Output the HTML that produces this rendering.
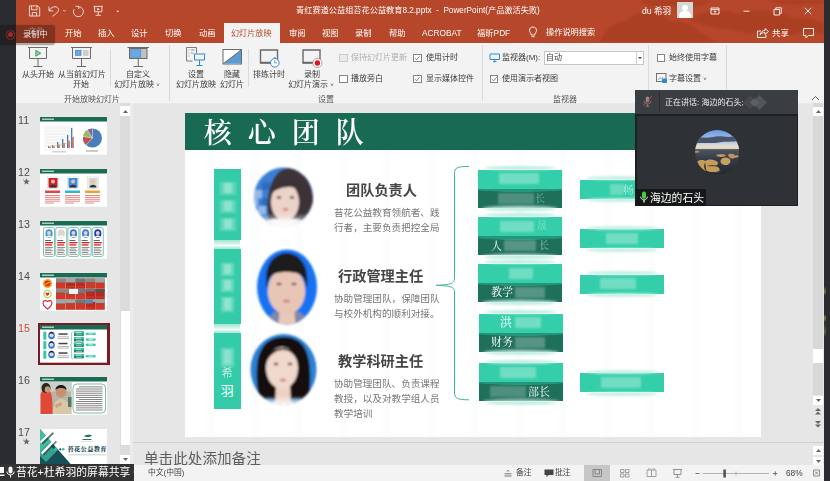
<!DOCTYPE html>
<html lang="zh-CN">
<head>
<meta charset="utf-8">
<title>PowerPoint</title>
<style>
*{box-sizing:border-box;margin:0;padding:0}
html,body{width:830px;height:481px;overflow:hidden;background:#e6e6e6}
body{position:relative;font-family:"Liberation Sans","Noto Sans CJK SC",sans-serif;font-size:8px;color:#333;line-height:1}
.a{position:absolute}
.t{position:absolute;white-space:nowrap;line-height:10px;height:10px}
.t,.num,.h3,.ds,.bt{will-change:transform}
.c{text-align:center}
/* frame */
#ldark{left:0;top:0;width:16px;height:481px;background:#2a2c2f}
#rdark{left:824px;top:0;width:6px;height:481px;background:#2a2c2f}
#title{left:16px;top:0;width:808px;height:42.500px;z-index:1;background:#b7472a;overflow:hidden}
#ribbon{left:16px;top:42px;width:808px;height:62px;background:#f3f3f3;border-bottom:1px solid #e9e9e9}
.w{color:#fff}
.sep{position:absolute;width:1px;background:#dadada}
.cb{position:absolute;width:8.400px;height:8.400px;border:1px solid #868686;background:#fdfdfd}
.cb.dis{border-color:#cbcbcb;background:#ebebeb}
.rl{font-size:8px;color:#3b3b3b}
.gl{font-size:8px;color:#555}
/* panel */
#panel{left:16px;top:103px;width:104px;height:362px;background:#e6e6e6;overflow:hidden}
.num{position:absolute;left:2px;font-size:12px;line-height:12px;color:#555;width:18px;text-align:left}
.th{position:absolute;left:24px;width:67px;height:38px;background:#fff;overflow:hidden}
.th .hd{position:absolute;left:0;top:0;width:67px;height:4px;background:#1a6b54}
#pscroll{left:120px;top:103px;width:10.400px;height:362px;background:#dcdcdc}
#split{left:130.400px;top:103px;width:2.600px;height:362px;background:#ececec}
/* main */
#slide{left:185.200px;top:113px;width:576.200px;height:323.800px;background:#fff;overflow:hidden}
#shead{left:0;top:0;width:577px;height:38px;background:#186a53}
.serif{font-family:"Liberation Serif","Noto Serif CJK SC",serif}
.bar{position:absolute;left:29px;width:26.500px;background:#34cca8}
.h3{position:absolute;font-size:14.200px;line-height:16px;font-weight:bold;color:#454545;white-space:nowrap}
.ds{position:absolute;font-size:9.600px;line-height:15px;color:#767676;white-space:nowrap}
.bx{position:absolute;width:84px;height:38px;background:#1e705b;overflow:hidden;margin-top:.5px}
.bx i{position:absolute;left:0;top:0;width:84px;height:19px;background:#34cfaa;display:block}
.bx b{position:absolute;left:-4px;top:16.500px;width:92px;height:6px;border-radius:50%;background:#23967a;display:block}
.bx u{position:absolute;left:4px;top:35.500px;width:76px;height:6px;border-radius:50%;background:rgba(255,255,255,.38);display:block;filter:blur(.8px)}
.rb{position:absolute;left:395px;width:84px;height:19px;background:#34cfaa;margin-top:.3px}
.bt{position:absolute;color:#fff;font-size:11px;line-height:12px;white-space:nowrap}
.mz{position:absolute;background:rgba(255,255,255,.35);filter:blur(1.2px)}
#notes{left:133px;top:442px;width:691px;height:23px;background:#e6e6e6;border-top:1px solid #cfcfcf}
#status{left:16px;top:465px;width:808px;height:16px;background:#f3f3f3}
#mscroll{left:813px;top:103px;width:10px;height:292px;background:#d8d8d8;overflow:visible}
.sb{position:absolute;width:10.400px;background:#fff}
/* video */
#vid{left:635px;top:90px;width:163px;height:116px;background:#1e1f21}
#vhead{left:0;top:0;width:163px;height:24px;background:#3a3d41}
#vbody{left:1.500px;top:25.500px;width:160px;height:89.500px;background:#2e3135}
#share{left:0;top:464.300px;width:134px;height:16.700px;background:#333334}
</style>
</head>
<body>
<div class="a" id="ldark"></div>
<div class="a" id="rdark"><div class="a" style="left:0;top:286px;width:1.500px;height:70px;background:linear-gradient(#2a2c2f 0,#8a8a30 8%,#2a2c2f 14%,#2a2c2f 40%,#9a9a28 46%,#2a2c2f 52%,#5a7a30 66%,#2a2c2f 72%,#2a2c2f 100%);opacity:.8"></div></div>
<div class="a" id="title">
<svg class="a" style="left:560px;top:0" width="248" height="42" viewBox="576 0 248 42">
<defs><filter id="tb"><feGaussianBlur stdDeviation="1.2"/></filter></defs>
<g fill="#a0381f" opacity=".5" filter="url(#tb)">
<path d="M600 42 C604 30 614 22 628 20 C640 8 662 10 672 22 C682 20 694 24 700 32 C706 36 712 40 716 42 Z"/>
<path d="M690 20 C700 10 724 8 738 14 C752 8 780 10 792 18 C806 16 818 20 824 24 V34 C812 30 800 32 790 36 C776 30 760 30 748 34 C732 28 708 30 690 20 Z"/>
<path d="M640 0 C646 6 660 8 672 5 C684 9 704 8 712 0 Z"/>
<path d="M770 0 C776 5 796 7 806 3 C812 5 820 4 824 2 V0 Z"/>
</g></svg>
<svg class="a" style="left:12px;top:4px" width="100" height="14" viewBox="28 4 100 14" fill="none" stroke="#fff" stroke-width=".85" opacity=".92">
<path d="M29.400 5.900 H37.800 L39.700 7.800 V16 H29.400 Z M31.600 5.900 V9.800 H37 V5.900 M32.300 16 V12.600 H36.600 V16"/>
<path d="M49 6.600 V10.900 H53.300 M49.200 10.700 C51 6.500 56.500 5.400 58.300 8.600 C59.300 11 57.500 12.800 52.500 16.300"/>
<path d="M63.200 10 L64.500 11.400 L65.800 10" stroke-width=".7"/>
<path d="M75.400 6.300 H78.700 V8.900 M78.700 6.700 A5 5 0 1 1 74 9.300"/>
<path d="M93.500 6.400 H103 M94.600 6.600 V11.800 H101.900 V6.600 M98.250 11.800 V15 M95.600 15.300 H100.900"/>
<path d="M97.200 7.800 L99.800 9.200 L97.200 10.600 Z" fill="#fff" stroke="none"/>
<path d="M116.300 10.800 L117.800 12.600 L119.300 10.800 Z" fill="#fff" stroke="none"/>
</svg>
<div class="t w" style="left:280px;top:5.800px;font-size:8.2px">青红赛道公益组苔花公益教育8.2.pptx&nbsp; -&nbsp; PowerPoint(产品激活失败)</div>
<div class="t w" style="left:625.500px;top:5.500px;font-size:8.600px">du 希羽</div>
<div class="a" style="left:661px;top:2px;width:16px;height:16px;background:#d6d6d6;overflow:hidden">
<div class="a" style="left:5px;top:2.500px;width:6px;height:6px;border-radius:50%;background:#fff"></div>
<div class="a" style="left:2px;top:9px;width:12px;height:10px;border-radius:5px 5px 0 0;background:#fff"></div>
</div>
<svg class="a" style="left:690px;top:3.500px" width="112" height="14" viewBox="0 0 112 14" fill="none" stroke="#fff" stroke-width=".9">
<path d="M5 4 H13 V10 H5 Z M5 5.600 H13 M9 9.200 V7 M7.800 8 L9 6.800 L10.200 8"/>
<path d="M37.500 7.200 H43.500"/>
<path d="M68 5.500 H73.500 V11 H68 Z M69.800 5.500 V3.800 H75.300 V9.300 H73.500"/>
<path d="M98.800 3.800 L105.200 10.200 M105.200 3.800 L98.800 10.200"/>
</svg>
<!-- tabs -->
<div class="a" style="left:207.500px;top:22.800px;width:56px;height:20px;background:#f3f3f3"></div>
<div class="t w" style="left:12px;top:26px;font-size:8.3px;opacity:.6">文件</div>
<div class="t w" style="left:49px;top:27.600px;font-size:8.300px">开始</div>
<div class="t w" style="left:81.500px;top:27.600px;font-size:8.300px">插入</div>
<div class="t w" style="left:115px;top:27.600px;font-size:8.300px">设计</div>
<div class="t w" style="left:149px;top:27.600px;font-size:8.300px">切换</div>
<div class="t w" style="left:182.500px;top:27.600px;font-size:8.300px">动画</div>
<div class="t" style="left:215px;top:29px;font-size:8.100px;color:#b7472a">幻灯片放映</div>
<div class="t w" style="left:272.500px;top:27.600px;font-size:8.300px">审阅</div>
<div class="t w" style="left:306px;top:27.600px;font-size:8.300px">视图</div>
<div class="t w" style="left:339px;top:27.600px;font-size:8.300px">录制</div>
<div class="t w" style="left:373px;top:27.600px;font-size:8.300px">帮助</div>
<div class="t w" style="left:406px;top:27.600px;font-size:8.300px">ACROBAT</div>
<div class="t w" style="left:461px;top:27.600px;font-size:8.300px">福昕PDF</div>
<svg class="a" style="left:512px;top:26px" width="10" height="13" viewBox="0 0 10 13" fill="none" stroke="#fff" stroke-width=".9"><path d="M3.200 9 C3.200 7 1.500 6.500 1.500 4.200 C1.500 2.200 3 1 5 1 C7 1 8.500 2.200 8.500 4.200 C8.500 6.500 6.800 7 6.800 9 Z M3.500 10.700 H6.500"/></svg>
<div class="t w" style="left:530px;top:27.600px;font-size:8.200px">操作说明搜索</div>
<svg class="a" style="left:738px;top:26px" width="64" height="13" viewBox="0 0 64 13" fill="none" stroke="#fff" stroke-width=".9">
<path d="M7 5 H3.500 V11.500 H12 V9 M6 9 C6.500 6 8.500 4.500 11 4.500 V2.500 L14.500 5.500 L11 8.500 V6.500 C9 6.500 7.500 7 6 9 Z"/>
<path d="M49.500 2.500 H59.500 V9.500 H54.500 L52 12 V9.500 H49.500 Z"/>
</svg>
<div class="t w" style="left:756px;top:27.600px;font-size:8.500px">共享</div>
</div>
<div class="a" id="ribbon"><div class="t c rl" style="left:-17.8px;width:80px;top:28px;">从头开始</div>
<div class="t c rl" style="left:25.6px;width:80px;top:28px;">从当前幻灯片</div>
<div class="t c rl" style="left:25.3px;width:80px;top:38px;">开始</div>
<div class="t c rl" style="left:82.2px;width:80px;top:28px;">自定义</div>
<div class="t c rl" style="left:81.2px;width:80px;top:38px;">幻灯片放映 <span style="font-size:6px">˅</span></div>
<div class="t c gl" style="left:36.2px;width:80px;top:53px;">开始放映幻灯片</div>
<div class="t c rl" style="left:140px;width:80px;top:28px;">设置</div>
<div class="t c rl" style="left:139.7px;width:80px;top:38px;">幻灯片放映</div>
<div class="t c rl" style="left:176px;width:80px;top:28px;">隐藏</div>
<div class="t c rl" style="left:175.7px;width:80px;top:38px;">幻灯片</div>
<div class="t c rl" style="left:212.9px;width:80px;top:28px;">排练计时</div>
<div class="t c rl" style="left:256px;width:80px;top:28px;">录制</div>
<div class="t c rl" style="left:254.5px;width:80px;top:38px;">幻灯片演示 <span style="font-size:6px">˅</span></div>
<div class="t c gl" style="left:269.5px;width:80px;top:53px;">设置</div>
<div class="t c gl" style="left:509.3px;width:80px;top:53px;">监视器</div>
<div class="sep" style="left:94.3px;top:7px;height:37.5px"></div>
<div class="sep" style="left:232.2px;top:7px;height:37.5px"></div>
<div class="sep" style="left:153.2px;top:3px;height:56px"></div>
<div class="sep" style="left:465.6px;top:3px;height:56px"></div>
<div class="sep" style="left:632.3px;top:3px;height:56px"></div>
<div class="sep" style="left:709.5px;top:3px;height:56px"></div>
<div class="cb dis" style="left:323.3px;top:11.8px"></div>
<div class="t rl" style="left:335.3px;top:11px;color:#b0b0b0">保持幻灯片更新</div>
<div class="cb" style="left:323.3px;top:32.6px"></div>
<div class="t rl" style="left:335.3px;top:32px;">播放旁白</div>
<div class="cb" style="left:397.3px;top:11.8px"><svg width="6" height="6" viewBox="0 0 6 6" style="position:absolute;left:0;top:0" fill="none" stroke="#555" stroke-width=".75"><path d="M1 3.2 L2.6 4.8 L5.5 1.4"/></svg></div>
<div class="t rl" style="left:409.7px;top:11px;">使用计时</div>
<div class="cb" style="left:397.3px;top:32.6px"><svg width="6" height="6" viewBox="0 0 6 6" style="position:absolute;left:0;top:0" fill="none" stroke="#555" stroke-width=".75"><path d="M1 3.2 L2.6 4.8 L5.5 1.4"/></svg></div>
<div class="t rl" style="left:409.7px;top:32px;">显示媒体控件</div>
<div class="cb" style="left:473.7px;top:32.6px"><svg width="6" height="6" viewBox="0 0 6 6" style="position:absolute;left:0;top:0" fill="none" stroke="#555" stroke-width=".75"><path d="M1 3.2 L2.6 4.8 L5.5 1.4"/></svg></div>
<div class="t rl" style="left:486px;top:32px;">使用演示者视图</div>
<div class="cb" style="left:640.7px;top:11.8px"></div>
<div class="t rl" style="left:652.9px;top:11px;">始终使用字幕</div>
<div class="t rl" style="left:652.9px;top:32px;">字幕设置 <span style="font-size:6px">˅</span></div>
<svg class="a" style="left:473px;top:11px" width="12" height="10" viewBox="0 0 12 10" fill="none" stroke="#2b88d8" stroke-width="1"><path d="M1 1 H10.5 V6.5 H1 Z M4 8.7 H7.5 M5.75 6.5 V8.5"/></svg>
<div class="t rl" style="left:486px;top:11px;">监视器(M):</div>
<div class="a" style="left:528px;top:8.5px;width:100px;height:14.5px;background:#fff;border:1px solid #c6c6c6"><div class="a" style="left:91px;top:0;width:1px;height:12.5px;background:#d0d0d0"></div><div class="a" style="left:93.2px;top:5.5px;width:0;height:0;border:2px solid transparent;border-top:2.5px solid #444"></div></div>
<div class="t rl" style="left:530.3px;top:11px;">自动</div>
<svg class="a" style="left:640px;top:31px" width="12" height="11" viewBox="0 0 12 11" fill="none"><rect x=".5" y=".5" width="9.5" height="8" fill="#f3f3f3" stroke="#666" stroke-width=".9"/><path d="M2 7 L4 4.5 L5.5 6 L7 4 " stroke="#888" stroke-width=".7"/><rect x="6" y="5.5" width="5" height="4.5" rx="1" fill="#2b88d8"/></svg>
<svg class="a" style="left:795px;top:53px" width="9" height="6" viewBox="0 0 9 6" fill="none" stroke="#555" stroke-width=".9"><path d="M1 5 L4.5 1.5 L8 5"/></svg>
<svg class="a" style="left:0;top:0" width="340" height="30" viewBox="16 42 340 30" fill="none" stroke="#6a6a6a" stroke-width="1">
<!-- from beginning -->
<path d="M28 47.5 H48 M29.5 48 V58.5 H46.500 V48 M38 58.500 V66 M33.500 66.500 H42.500" />
<path d="M35.800 50.300 L40.800 53.200 L35.800 56.200 Z" fill="#8fd0a0" stroke="#3c9a58" stroke-width=".9"/>
<!-- from current -->
<path d="M71 47.500 H92 M72.500 48 V58.500 H90.500 V48 M81.500 58.500 V66 M77 66.500 H86"/>
<rect x="75.500" y="50.300" width="5.500" height="5" fill="#66abe8" stroke="#3a82c8" stroke-width=".7"/>
<path d="M83 51 H88.500 M83 53 H88.500 M83 55 H88.500" stroke="#8a8a8a" stroke-width=".7"/>
<!-- custom -->
<path d="M127.500 47.500 H149 M138.300 59 V66 M133.500 66.500 H143"/>
<rect x="129.500" y="48.500" width="17.500" height="10" fill="#c2c2c2" stroke="#6a6a6a"/>
<rect x="130.800" y="49.800" width="10" height="7.400" fill="#66abe8" stroke="#3a82c8" stroke-width=".6"/>
<!-- setup -->
<path d="M186.500 47.500 H196.500 V53 M186.500 47.500 V61 H192.500" stroke="#7a7a7a"/>
<path d="M188.500 50 H189.500 M188.500 53 H189.500 M188.500 56 H189.500 M191 50 H194.500 M191 53 H193" stroke="#7a7a7a" stroke-width=".8"/>
<path d="M193.500 54 H205.500 M194.500 54.500 V60 H204.500 V54.500 M199.500 60 V65 M196.500 65.500 H202.500" stroke="#2b88d8"/>
<!-- hide -->
<rect x="223" y="49.500" width="18.500" height="14.500" fill="#fff" stroke="#6a6a6a"/>
<path d="M241 50 V63.500 H223.500 Z" fill="#5b9bd5" stroke="none"/>
<path d="M223.500 63.500 L241 50" stroke="#555" stroke-width=".8"/>
<!-- rehearse -->
<path d="M260.500 50 H277.500 V62.500 H260.500 Z" stroke="#6a6a6a" stroke-width="1.400"/>
<path d="M260 63 H278" stroke="#6a6a6a" stroke-width="1.600"/>
<circle cx="274.800" cy="62.800" r="4.300" fill="#fff" stroke="#2b88d8" stroke-width="1"/>
<path d="M274.800 60.300 V63 H276.800 M273.800 57.700 H275.800" stroke="#2b88d8" stroke-width=".8"/>
<!-- record -->
<path d="M303 50 H320 V62.500 H303 Z" stroke="#6a6a6a" stroke-width="1.400"/>
<path d="M302.500 63 H320.500" stroke="#6a6a6a" stroke-width="1.600"/>
<circle cx="317.400" cy="63" r="4.600" fill="#fff" stroke="#8a8a8a" stroke-width=".7"/>
<circle cx="317.400" cy="63" r="2.700" fill="#e81123" stroke="none"/>
</svg>
</div>
<div class="a" id="panel"><div class="num" style="top:10.5px;font-size:10.700px;color:#4c4c4c">11</div>
<div class="num" style="top:62.5px;font-size:10.700px;color:#4c4c4c">12</div>
<div class="num" style="top:114.5px;font-size:10.700px;color:#4c4c4c">13</div>
<div class="num" style="top:166.5px;font-size:10.700px;color:#4c4c4c">14</div>
<div class="num" style="top:218.5px;font-size:10.700px;color:#c8502f">15</div>
<div class="num" style="top:270.5px;font-size:10.700px;color:#4c4c4c">16</div>
<div class="num" style="top:322.5px;font-size:10.700px;color:#4c4c4c">17</div>
<svg class="a" style="left:7px;top:75px" width="7" height="7" viewBox="0 0 7 7"><path d="M3.500 0.300 L4.400 2.600 L6.800 2.700 L4.900 4.200 L5.600 6.600 L3.500 5.200 L1.400 6.600 L2.100 4.200 L0.200 2.700 L2.600 2.600 Z" fill="#666"/><path d="M0 1 H1.500 M0 2.500 H1" stroke="#888" stroke-width=".5"/></svg>
<svg class="a" style="left:7px;top:335px" width="7" height="7" viewBox="0 0 7 7"><path d="M3.500 0.300 L4.400 2.600 L6.800 2.700 L4.900 4.200 L5.600 6.600 L3.500 5.200 L1.400 6.600 L2.100 4.200 L0.200 2.700 L2.600 2.600 Z" fill="#666"/><path d="M0 1 H1.500 M0 2.500 H1" stroke="#888" stroke-width=".5"/></svg>
<svg class="a" style="left:24.400px;top:14px" width="67" height="37.700" viewBox="0 0 67 37.700"><rect width="67" height="37.700" fill="#fff"/><rect x="0" y="0" width="67" height="4.500" fill="#1a6b54"/><rect x="2" y="1.500" width="12" height="1.500" fill="#cfe6dd" opacity=".8"/><rect x="4" y="8" width="30" height="26" fill="#fafafa"/><path d="M5 11 H33" stroke="#ddd" stroke-width=".4"/><path d="M5 14 H33" stroke="#ddd" stroke-width=".4"/><path d="M5 17 H33" stroke="#ddd" stroke-width=".4"/><path d="M5 20 H33" stroke="#ddd" stroke-width=".4"/><path d="M5 23 H33" stroke="#ddd" stroke-width=".4"/><path d="M5 26 H33" stroke="#ddd" stroke-width=".4"/><path d="M5 29 H33" stroke="#ddd" stroke-width=".4"/><rect x="8" y="29" width="1.300" height="2" fill="#4a7ebb"/><rect x="9.4" y="29.9" width="1.300" height="1.1" fill="#c0504d"/><rect x="12" y="28" width="1.300" height="3" fill="#4a7ebb"/><rect x="13.4" y="29.35" width="1.300" height="1.6500000000000001" fill="#c0504d"/><rect x="17" y="25" width="1.300" height="6" fill="#4a7ebb"/><rect x="18.4" y="27.7" width="1.300" height="3.3000000000000003" fill="#c0504d"/><rect x="22" y="22" width="1.300" height="9" fill="#4a7ebb"/><rect x="23.4" y="26.05" width="1.300" height="4.95" fill="#c0504d"/><rect x="27" y="18" width="1.300" height="13" fill="#4a7ebb"/><rect x="28.4" y="23.85" width="1.300" height="7.15" fill="#c0504d"/><rect x="31" y="11" width="1.300" height="20" fill="#4a7ebb"/><rect x="32.4" y="20.0" width="1.300" height="11.0" fill="#c0504d"/><path d="M8 30 L13 29 L18 28 L23 27 L28 26 L32 25" stroke="#e0c040" stroke-width=".5" fill="none"/><circle cx="52.500" cy="21" r="9.500" fill="#4a7ebb"/><path d="M52.500 21 L46 28 A9.500 9.500 0 0 1 43.200 19.500 Z" fill="#c0504d"/><path d="M52.500 21 L43.200 19.500 A9.500 9.500 0 0 1 47.500 13 Z" fill="#9bbb59"/><path d="M52.500 21 L47.500 13 A9.500 9.500 0 0 1 52.500 11.500 Z" fill="#8064a2"/><path d="M52.500 21 L46 28 M52.500 21 L43.200 19.500 M52.500 21 L47.500 13 M52.500 21 V11.500" stroke="#fff" stroke-width=".5"/><rect x="46" y="33.500" width="12" height="1" fill="#999"/><rect x="12" y="34.500" width="14" height=".8" fill="#aaa"/></svg>
<svg class="a" style="left:24.400px;top:66px" width="67" height="37.700" viewBox="0 0 67 37.700"><rect width="67" height="37.700" fill="#fff"/><rect x="0" y="0" width="67" height="4.500" fill="#1a6b54"/><rect x="2" y="1.500" width="12" height="1.500" fill="#cfe6dd" opacity=".8"/><rect x="7.5" y="8" width="11" height="11.500" fill="#fff" stroke="#ccc" stroke-width=".5"/><rect x="8.5" y="9" width="9" height="9.500" fill="#c8202a"/><circle cx="13.0" cy="12.500" r="2" fill="#e8c0a0"/><path d="M9.5 18.500 C9.5 15 16.5 15 16.5 18.500 Z" fill="#333"/><rect x="5.0" y="21.500" width="15" height="2.500" fill="#e0454a"/><rect x="5.0" y="26.0" width="15" height=".9" fill="#e07a7a"/><rect x="5.0" y="27.9" width="15" height=".9" fill="#e07a7a"/><rect x="5.0" y="29.8" width="15" height=".9" fill="#e07a7a"/><rect x="5.0" y="31.7" width="15" height=".9" fill="#e07a7a"/><rect x="5.0" y="33.6" width="9" height=".9" fill="#e07a7a"/><rect x="27.5" y="8" width="11" height="11.500" fill="#fff" stroke="#ccc" stroke-width=".5"/><rect x="28.5" y="9" width="9" height="9.500" fill="#3a8fdc"/><circle cx="33.0" cy="12.500" r="2" fill="#e8c0a0"/><path d="M29.5 18.500 C29.5 15 36.5 15 36.5 18.500 Z" fill="#333"/><rect x="25.0" y="21.500" width="15" height="2.500" fill="#25bcd0"/><rect x="25.0" y="26.0" width="15" height=".9" fill="#e07a7a"/><rect x="25.0" y="27.9" width="15" height=".9" fill="#e07a7a"/><rect x="25.0" y="29.8" width="15" height=".9" fill="#e07a7a"/><rect x="25.0" y="31.7" width="15" height=".9" fill="#e07a7a"/><rect x="25.0" y="33.6" width="9" height=".9" fill="#e07a7a"/><rect x="47.5" y="8" width="11" height="11.500" fill="#fff" stroke="#ccc" stroke-width=".5"/><rect x="48.5" y="9" width="9" height="9.500" fill="#d8d8d0"/><circle cx="53.0" cy="12.500" r="2" fill="#e8c0a0"/><path d="M49.5 18.500 C49.5 15 56.5 15 56.5 18.500 Z" fill="#333"/><rect x="45.0" y="21.500" width="15" height="2.500" fill="#f0a030"/><rect x="45.0" y="26.0" width="15" height=".9" fill="#e07a7a"/><rect x="45.0" y="27.9" width="15" height=".9" fill="#e07a7a"/><rect x="45.0" y="29.8" width="15" height=".9" fill="#e07a7a"/><rect x="45.0" y="31.7" width="15" height=".9" fill="#e07a7a"/><rect x="45.0" y="33.6" width="9" height=".9" fill="#e07a7a"/></svg>
<svg class="a" style="left:24.400px;top:118px" width="67" height="37.700" viewBox="0 0 67 37.700"><rect width="67" height="37.700" fill="#fff"/><rect x="0" y="0" width="67" height="4.500" fill="#1a6b54"/><rect x="2" y="1.500" width="12" height="1.500" fill="#cfe6dd" opacity=".8"/><rect x="3.5" y="6.500" width="11" height="29" rx="2" fill="#fff" stroke="#2c9a80" stroke-width=".6"/><ellipse cx="9.0" cy="12.500" rx="3.600" ry="4.300" fill="#3a9ad8"/><circle cx="9.0" cy="12" r="2" fill="#f0d0b8"/><path d="M6.3 16 C7.0 14 11.0 14 11.7 16 Z" fill="#fff"/><rect x="5.0" y="19" width="6" height=".9" fill="#555"/><rect x="5.0" y="21" width="8" height="1.300" fill="#e02020"/><rect x="5.0" y="23.300" width="7" height="1.300" fill="#e02020"/><rect x="5.0" y="26.0" width="8" height=".8" fill="#777"/><rect x="5.0" y="27.7" width="6.5" height=".8" fill="#777"/><rect x="5.0" y="29.4" width="8" height=".8" fill="#777"/><rect x="5.0" y="31.1" width="6.5" height=".8" fill="#777"/><rect x="5.0" y="32.8" width="8" height=".8" fill="#777"/><rect x="15.7" y="6.500" width="11" height="29" rx="2" fill="#fff" stroke="#2c9a80" stroke-width=".6"/><ellipse cx="21.2" cy="12.500" rx="3.600" ry="4.300" fill="#d8d8d8"/><circle cx="21.2" cy="12" r="2" fill="#f0d0b8"/><path d="M18.5 16 C19.2 14 23.2 14 23.9 16 Z" fill="#fff"/><rect x="17.2" y="19" width="6" height=".9" fill="#555"/><rect x="17.2" y="21" width="8" height="1.300" fill="#e02020"/><rect x="17.2" y="23.300" width="7" height="1.300" fill="#e02020"/><rect x="17.2" y="26.0" width="8" height=".8" fill="#777"/><rect x="17.2" y="27.7" width="6.5" height=".8" fill="#777"/><rect x="17.2" y="29.4" width="8" height=".8" fill="#777"/><rect x="17.2" y="31.1" width="6.5" height=".8" fill="#777"/><rect x="17.2" y="32.8" width="8" height=".8" fill="#777"/><rect x="27.9" y="6.500" width="11" height="29" rx="2" fill="#fff" stroke="#2c9a80" stroke-width=".6"/><ellipse cx="33.4" cy="12.500" rx="3.600" ry="4.300" fill="#2a7ac8"/><circle cx="33.4" cy="12" r="2" fill="#f0d0b8"/><path d="M30.7 16 C31.4 14 35.4 14 36.099999999999994 16 Z" fill="#fff"/><rect x="29.4" y="19" width="6" height=".9" fill="#555"/><rect x="29.4" y="21" width="8" height="1.300" fill="#e02020"/><rect x="29.4" y="23.300" width="7" height="1.300" fill="#e02020"/><rect x="29.4" y="26.0" width="8" height=".8" fill="#777"/><rect x="29.4" y="27.7" width="6.5" height=".8" fill="#777"/><rect x="29.4" y="29.4" width="8" height=".8" fill="#777"/><rect x="29.4" y="31.1" width="6.5" height=".8" fill="#777"/><rect x="29.4" y="32.8" width="8" height=".8" fill="#777"/><rect x="40.099999999999994" y="6.500" width="11" height="29" rx="2" fill="#fff" stroke="#2c9a80" stroke-width=".6"/><ellipse cx="45.599999999999994" cy="12.500" rx="3.600" ry="4.300" fill="#3a7ad8"/><circle cx="45.599999999999994" cy="12" r="2" fill="#f0d0b8"/><path d="M42.89999999999999 16 C43.599999999999994 14 47.599999999999994 14 48.3 16 Z" fill="#fff"/><rect x="41.599999999999994" y="19" width="6" height=".9" fill="#555"/><rect x="41.599999999999994" y="21" width="8" height="1.300" fill="#e02020"/><rect x="41.599999999999994" y="23.300" width="7" height="1.300" fill="#e02020"/><rect x="41.599999999999994" y="26.0" width="8" height=".8" fill="#777"/><rect x="41.599999999999994" y="27.7" width="6.5" height=".8" fill="#777"/><rect x="41.599999999999994" y="29.4" width="8" height=".8" fill="#777"/><rect x="41.599999999999994" y="31.1" width="6.5" height=".8" fill="#777"/><rect x="41.599999999999994" y="32.8" width="8" height=".8" fill="#777"/><rect x="52.3" y="6.500" width="11" height="29" rx="2" fill="#fff" stroke="#2c9a80" stroke-width=".6"/><ellipse cx="57.8" cy="12.500" rx="3.600" ry="4.300" fill="#1a3ab8"/><circle cx="57.8" cy="12" r="2" fill="#f0d0b8"/><path d="M55.099999999999994 16 C55.8 14 59.8 14 60.5 16 Z" fill="#fff"/><rect x="53.8" y="19" width="6" height=".9" fill="#555"/><rect x="53.8" y="21" width="8" height="1.300" fill="#e02020"/><rect x="53.8" y="23.300" width="7" height="1.300" fill="#e02020"/><rect x="53.8" y="26.0" width="8" height=".8" fill="#777"/><rect x="53.8" y="27.7" width="6.5" height=".8" fill="#777"/><rect x="53.8" y="29.4" width="8" height=".8" fill="#777"/><rect x="53.8" y="31.1" width="6.5" height=".8" fill="#777"/><rect x="53.8" y="32.8" width="8" height=".8" fill="#777"/></svg>
<svg class="a" style="left:24.400px;top:170px" width="67" height="37.700" viewBox="0 0 67 37.700"><rect width="67" height="37.700" fill="#fff"/><rect x="0" y="0" width="67" height="4.500" fill="#1a6b54"/><rect x="2" y="1.500" width="12" height="1.500" fill="#cfe6dd" opacity=".8"/><circle cx="7.500" cy="10.500" r="4.600" fill="#f0b020"/><circle cx="7.500" cy="10.500" r="3" fill="#e03020"/><path d="M5.500 11.500 L9.500 9" stroke="#ffe060" stroke-width="1"/><circle cx="7.500" cy="21" r="4.300" fill="#b8d848"/><circle cx="7.500" cy="21" r="3" fill="#fff"/><path d="M7.500 23 C4 20.500 6 18.500 7.500 20 C9 18.500 11 20.500 7.500 23 Z" fill="#e03030"/><path d="M7.500 36 C0 30.500 3.500 25.500 7.500 28.500 C11.500 25.500 15 30.500 7.500 36 Z" fill="#fff" stroke="#e02040" stroke-width="1.100"/><rect x="16.0" y="5.5" width="9.600" height="10.300" fill="#c83a28"/><rect x="16.0" y="5.5" width="9.600" height="4" fill="#8a8a88"/><rect x="17.0" y="13.0" width="7.600" height="1.300" fill="#e83020"/><rect x="25.8" y="5.5" width="9.600" height="10.300" fill="#a83020"/><rect x="25.8" y="5.5" width="9.600" height="4" fill="#9aa8b0"/><rect x="26.8" y="13.0" width="7.600" height="1.300" fill="#e83020"/><rect x="35.6" y="5.5" width="9.600" height="10.300" fill="#b82a20"/><rect x="35.6" y="5.5" width="9.600" height="4" fill="#6a7a80"/><rect x="36.6" y="13.0" width="7.600" height="1.300" fill="#e83020"/><rect x="45.400000000000006" y="5.5" width="9.600" height="10.300" fill="#c04030"/><rect x="45.400000000000006" y="5.5" width="9.600" height="3.5" fill="#8a8a88"/><rect x="46.400000000000006" y="13.0" width="7.600" height="1.300" fill="#e83020"/><rect x="55.2" y="5.5" width="9.600" height="10.300" fill="#c83a28"/><rect x="55.2" y="5.5" width="9.600" height="4" fill="#9aa8b0"/><rect x="56.2" y="13.0" width="7.600" height="1.300" fill="#e83020"/><rect x="16.0" y="16.0" width="9.600" height="10.300" fill="#c04030"/><rect x="16.0" y="16.0" width="9.600" height="3.5" fill="#8a8a88"/><rect x="17.0" y="23.5" width="7.600" height="1.300" fill="#e83020"/><rect x="25.8" y="16.0" width="9.600" height="10.300" fill="#c83a28"/><rect x="25.8" y="16.0" width="9.600" height="4" fill="#8a8a88"/><rect x="26.8" y="23.5" width="7.600" height="1.300" fill="#e83020"/><rect x="35.6" y="16.0" width="9.600" height="10.300" fill="#c04030"/><rect x="35.6" y="16.0" width="9.600" height="4" fill="#6a7a80"/><rect x="36.6" y="23.5" width="7.600" height="1.300" fill="#e83020"/><rect x="45.400000000000006" y="16.0" width="9.600" height="10.300" fill="#b82a20"/><rect x="45.400000000000006" y="16.0" width="9.600" height="2.5" fill="#6a7a80"/><rect x="46.400000000000006" y="23.5" width="7.600" height="1.300" fill="#e83020"/><rect x="55.2" y="16.0" width="9.600" height="10.300" fill="#a83020"/><rect x="55.2" y="16.0" width="9.600" height="2.5" fill="#4a5a60"/><rect x="56.2" y="23.5" width="7.600" height="1.300" fill="#e83020"/><rect x="16.0" y="26.5" width="9.600" height="10.300" fill="#c04030"/><rect x="16.0" y="26.5" width="9.600" height="4" fill="#9aa8b0"/><rect x="17.0" y="34.0" width="7.600" height="1.300" fill="#e83020"/><rect x="25.8" y="26.5" width="9.600" height="10.300" fill="#c04030"/><rect x="25.8" y="26.5" width="9.600" height="3.5" fill="#9aa8b0"/><rect x="26.8" y="34.0" width="7.600" height="1.300" fill="#e83020"/><rect x="35.6" y="26.5" width="9.600" height="10.300" fill="#c83a28"/><rect x="35.6" y="26.5" width="9.600" height="3.5" fill="#6a7a80"/><rect x="36.6" y="34.0" width="7.600" height="1.300" fill="#e83020"/><rect x="45.400000000000006" y="26.5" width="9.600" height="10.300" fill="#b82a20"/><rect x="45.400000000000006" y="26.5" width="9.600" height="2.5" fill="#9aa8b0"/><rect x="46.400000000000006" y="34.0" width="7.600" height="1.300" fill="#e83020"/><rect x="55.2" y="26.5" width="9.600" height="10.300" fill="#c83a28"/><rect x="55.2" y="26.5" width="9.600" height="3.5" fill="#9aa8b0"/><rect x="56.2" y="34.0" width="7.600" height="1.300" fill="#e83020"/><rect x="29" y="16" width="9" height="5" fill="#f4f4f4"/><rect x="45" y="26.500" width="8" height="4" fill="#5a8ab0"/></svg>
<div class="a" style="left:22.200px;top:219.800px;width:71.600px;height:42.200px;background:#7a1a22"></div><svg class="a" style="left:24.400px;top:222px" width="67" height="37.700" viewBox="0 0 67 37.700"><rect width="67" height="37.700" fill="#fff"/><rect x="0" y="0" width="67" height="4.500" fill="#1a6b54"/><rect x="2" y="1.500" width="12" height="1.500" fill="#cfe6dd" opacity=".8"/><rect x="3.300" y="6.7" width="3" height="8" fill="#35c8a5"/><ellipse cx="11.500" cy="10.5" rx="3.300" ry="3.800" fill="#2a7ae0"/><circle cx="11.500" cy="10.3" r="2" fill="#f0d0c0"/><path d="M9.300 9.5 C9.300 6.0 13.700 6.0 13.700 9.5 C12.500 8.0 10.500 8.0 9.300 9.5 Z" fill="#222"/><rect x="18.500" y="8.3" width="9" height="1.500" fill="#444"/><rect x="17.500" y="11.5" width="11.500" height=".7" fill="#999"/><rect x="17.500" y="13.2" width="11.500" height=".7" fill="#999"/><rect x="3.300" y="16.2" width="3" height="8" fill="#35c8a5"/><ellipse cx="11.500" cy="20.0" rx="3.300" ry="3.800" fill="#2a7ae0"/><circle cx="11.500" cy="19.8" r="2" fill="#f0d0c0"/><path d="M9.300 19.0 C9.300 15.5 13.700 15.5 13.700 19.0 C12.500 17.5 10.500 17.5 9.300 19.0 Z" fill="#222"/><rect x="18.500" y="17.8" width="9" height="1.500" fill="#444"/><rect x="17.500" y="21.0" width="11.500" height=".7" fill="#999"/><rect x="17.500" y="22.7" width="11.500" height=".7" fill="#999"/><rect x="3.300" y="25.7" width="3" height="8" fill="#35c8a5"/><ellipse cx="11.500" cy="29.5" rx="3.300" ry="3.800" fill="#2a7ae0"/><circle cx="11.500" cy="29.3" r="2" fill="#f0d0c0"/><path d="M9.300 28.5 C9.300 25.0 13.700 25.0 13.700 28.5 C12.500 27.0 10.500 27.0 9.300 28.5 Z" fill="#222"/><rect x="18.500" y="27.3" width="9" height="1.500" fill="#444"/><rect x="17.500" y="30.5" width="11.500" height=".7" fill="#999"/><rect x="17.500" y="32.2" width="11.500" height=".7" fill="#999"/><path d="M33 7 C31.800 7 31.500 7.500 31.500 8.500 V19 C31.500 20 31 20.300 30 20.500 C31 20.700 31.500 21 31.500 22 V32.500 C31.500 33.500 31.800 34 33 34" fill="none" stroke="#35b090" stroke-width=".5"/><rect x="34" y="6.5" width="9.800" height="4.400" fill="#1d7a62"/><rect x="34" y="6.5" width="9.800" height="2.200" fill="#36c9a7"/><rect x="36" y="7.2" width="5" height=".8" fill="#d8f4ec"/><rect x="36" y="9.4" width="6" height=".8" fill="#b0d8cc"/><rect x="34" y="12" width="9.800" height="4.400" fill="#1d7a62"/><rect x="34" y="12" width="9.800" height="2.200" fill="#36c9a7"/><rect x="36" y="12.7" width="5" height=".8" fill="#d8f4ec"/><rect x="36" y="14.9" width="6" height=".8" fill="#b0d8cc"/><rect x="34" y="17.5" width="9.800" height="4.400" fill="#1d7a62"/><rect x="34" y="17.5" width="9.800" height="2.200" fill="#36c9a7"/><rect x="36" y="18.2" width="5" height=".8" fill="#d8f4ec"/><rect x="36" y="20.4" width="6" height=".8" fill="#b0d8cc"/><rect x="34" y="23" width="9.800" height="4.400" fill="#1d7a62"/><rect x="34" y="23" width="9.800" height="2.200" fill="#36c9a7"/><rect x="36" y="23.7" width="5" height=".8" fill="#d8f4ec"/><rect x="36" y="25.9" width="6" height=".8" fill="#b0d8cc"/><rect x="34" y="29" width="9.800" height="4.400" fill="#1d7a62"/><rect x="34" y="29" width="9.800" height="2.200" fill="#36c9a7"/><rect x="36" y="29.7" width="5" height=".8" fill="#d8f4ec"/><rect x="36" y="31.9" width="6" height=".8" fill="#b0d8cc"/><rect x="45.800" y="7.7" width="9.800" height="2.200" fill="#36c9a7"/><rect x="48.500" y="8.4" width="4.500" height=".8" fill="#d8f4ec"/><rect x="45.800" y="13.5" width="9.800" height="2.200" fill="#36c9a7"/><rect x="48.500" y="14.2" width="4.500" height=".8" fill="#d8f4ec"/><rect x="45.800" y="18.7" width="9.800" height="2.200" fill="#36c9a7"/><rect x="48.500" y="19.4" width="4.500" height=".8" fill="#d8f4ec"/><rect x="45.800" y="30.2" width="9.800" height="2.200" fill="#36c9a7"/><rect x="48.500" y="30.9" width="4.500" height=".8" fill="#d8f4ec"/></svg>
<svg class="a" style="left:24.400px;top:274px" width="67" height="37.700" viewBox="0 0 67 37.700"><rect width="67" height="37.700" fill="#fff"/><rect x="0" y="0" width="67" height="4.500" fill="#1a6b54"/><rect x="2" y="1.500" width="12" height="1.500" fill="#cfe6dd" opacity=".8"/><rect x="0.500" y="5.500" width="31" height="31.500" fill="#b8b4a8"/><rect x="0.500" y="5.500" width="31" height="9" fill="#c8d0c8"/><path d="M0.500 37 V17 C3 11 10 11 11.500 18 C13 24 12 30 13 37 Z" fill="#e04838"/><ellipse cx="6" cy="11" rx="4.500" ry="5" fill="#2a2420"/><ellipse cx="7.500" cy="12.500" rx="2.800" ry="3.300" fill="#c89878"/><ellipse cx="21" cy="14.500" rx="5.500" ry="6" fill="#c89070"/><path d="M15.500 13 C15.500 6.500 26.500 6.500 26.500 13 C24 10.500 18 10.500 15.500 13 Z" fill="#1e1a18"/><path d="M12.500 37 C13 26 17 22 21 22 C26 22 30 26 31.500 37 Z" fill="#d8c8a8"/><path d="M15 28 L21 25 L22 28 L16 31 Z" fill="#d0a080"/><rect x="28" y="20" width="3.500" height="10" fill="#5a7a60"/><rect x="33" y="7" width="32.500" height="29" rx="4" fill="#fff" stroke="#2c8a70" stroke-width=".6"/><rect x="39" y="9.5" width="23.5" height=".8" fill="#666"/><rect x="36" y="11.6" width="26.5" height=".8" fill="#666"/><rect x="36" y="13.7" width="26.5" height=".8" fill="#666"/><rect x="36" y="15.8" width="26.5" height=".8" fill="#666"/><rect x="36" y="17.9" width="26.5" height=".8" fill="#666"/><rect x="36" y="20.0" width="26.5" height=".8" fill="#666"/><rect x="39" y="22.1" width="23.5" height=".8" fill="#666"/><rect x="36" y="24.200000000000003" width="26.5" height=".8" fill="#666"/><rect x="36" y="26.3" width="26.5" height=".8" fill="#666"/><rect x="36" y="28.400000000000002" width="26.5" height=".8" fill="#666"/><rect x="36" y="30.5" width="26.5" height=".8" fill="#666"/><rect x="36" y="32.6" width="26.5" height=".8" fill="#666"/></svg>
<svg class="a" style="left:24.200px;top:326px" width="67" height="37.700" viewBox="0 0 67 37.700"><defs><filter id="b17"><feGaussianBlur stdDeviation=".5"/></filter></defs><rect width="67" height="37.700" fill="#fff"/>
<path d="M0 0 L33 37.700 H0 Z" fill="#17505a"/>
<path d="M0 0 L12.500 14.300 L0 27 Z" fill="#42b9a2"/>
<path d="M0 22 L8 14 L16 23 L6 33 L0 27 Z" fill="#3aa892" opacity=".9"/>
<g filter="url(#b17)"><path d="M1 13 L12 2.500 L14 4.500 L3 15.500 Z" fill="#2a3a40" opacity=".7"/><path d="M2 24 L15 11 L17 13 L4 26.500 Z" fill="#20303a" opacity=".6"/></g>
<path d="M0 12.500 L11.500 1.500 L12.800 3 L1 14.500 Z M1 23.500 L14.500 10 L16 11.500 L2.500 25.500 Z" fill="#fff"/>
<path d="M15.500 18 L18 20.500 L15.500 23 L13 20.500 Z" fill="#3ab8a0"/><circle cx="20.300" cy="20.300" r="1.100" fill="#17505a"/><circle cx="23.300" cy="20.300" r="1.200" fill="#3ab8a0"/>
<path d="M44 7 C46 5.500 50 5.500 52 6.200 C50.500 8.500 46 8.800 44 7 Z" fill="#1a7a5a"/><rect x="42.500" y="10" width="9" height=".9" fill="#2a5a50"/><rect x="41" y="12.300" width="12" height=".4" fill="#9ab8b0"/>
<text x="27.500" y="21.800" font-family="Liberation Serif,Noto Serif CJK SC,serif" font-weight="900" font-size="6.200" fill="#1c4850" textLength="39" lengthAdjust="spacing">苔花公益教育</text>
<rect x="28.500" y="25.600" width="38" height=".6" fill="#9ab4ac"/></svg>

</div>
<div class="a" id="pscroll"><div class="sb" style="left:0;top:2.800px;height:10.300px"></div>
<svg class="a" style="left:2.500px;top:6.500px" width="5" height="3" viewBox="0 0 5 3"><path d="M0 3 L2.500 0 L5 3 Z" fill="#666"/></svg>
<div class="sb" style="left:0.500px;top:208px;height:134px;width:9px"></div>
<div class="sb" style="left:0;top:351.500px;height:9.500px"></div>
<svg class="a" style="left:2.500px;top:355px" width="5" height="3" viewBox="0 0 5 3"><path d="M0 0 L2.500 3 L5 0 Z" fill="#666"/></svg>
</div>
<div class="a" id="split"></div>
<div class="a" id="mscroll"><div class="sb" style="left:0;top:3.500px;height:9px;width:10px"></div>
<svg class="a" style="left:2.500px;top:6.500px" width="5" height="3" viewBox="0 0 5 3"><path d="M0 3 L2.500 0 L5 3 Z" fill="#666"/></svg>
<div class="sb" style="left:0;top:246px;height:13.500px;width:10px"></div>
<div class="sb" style="left:0;top:292.500px;height:9.500px;width:10px"></div>
<svg class="a" style="left:2.500px;top:296px" width="5" height="3" viewBox="0 0 5 3"><path d="M0 0 L2.500 3 L5 0 Z" fill="#666"/></svg>
<svg class="a" style="left:2px;top:305px" width="6" height="20" viewBox="0 0 6 20" fill="#666"><path d="M0 3 L3 0 L6 3 Z M0 6.500 L3 3.500 L6 6.500 Z M0 13 L3 16 L6 13 Z M0 16.500 L3 19.500 L6 16.500 Z"/></svg>
</div>
<div class="a" id="slide"><div class="a" id="shead"></div>
<div class="a serif w" style="left:18.500px;top:2.400px;font-size:28px;line-height:38px;letter-spacing:16px;font-weight:600;white-space:nowrap">核心团队</div>
<div class="a" style="left:0;top:37px;width:577px;height:287px;background:repeating-linear-gradient(90deg,#fff 0,#fff 20px,#fbfcfc 26px,#fff 32px,#fff 44px)"></div>
<div class="bar" style="top:56px;height:71px"></div>
<div class="a" style="left:29px;width:26px;top:127px;height:5px;background:linear-gradient(#9fe5d3,#e4f8f3)"></div>
<div class="bar" style="top:136px;height:75px"></div>
<div class="a" style="left:29px;width:26px;top:211px;height:5px;background:linear-gradient(#9fe5d3,#e4f8f3)"></div>
<div class="a" style="left:29px;width:26px;top:133px;height:3px;background:linear-gradient(#e4f8f3,#9fe5d3)"></div>
<div class="bar" style="top:220px;height:75.7px"></div>
<div class="a" style="left:29px;width:26px;top:217px;height:3px;background:linear-gradient(#e4f8f3,#9fe5d3)"></div>
<div class="a" style="left:34.5px;top:68.6px;width:16px;height:13.5px;background:rgba(255,255,255,0.22);filter:blur(1.1px)"></div>
<div class="a" style="left:39px;top:69.6px;width:8px;height:10.5px;background:rgba(255,255,255,0.3);filter:blur(0.8px)"></div>
<div class="a" style="left:34.5px;top:87.3px;width:16px;height:13px;background:rgba(255,255,255,0.22);filter:blur(1.1px)"></div>
<div class="a" style="left:39px;top:88.3px;width:8px;height:10px;background:rgba(255,255,255,0.3);filter:blur(0.8px)"></div>
<div class="a" style="left:34.5px;top:104.5px;width:16px;height:13.5px;background:rgba(255,255,255,0.22);filter:blur(1.1px)"></div>
<div class="a" style="left:39px;top:105.5px;width:8px;height:10.5px;background:rgba(255,255,255,0.3);filter:blur(0.8px)"></div>
<div class="a" style="left:35.5px;top:149.7px;width:13px;height:13.5px;background:rgba(255,255,255,0.25);filter:blur(1.1px)"></div>
<div class="a" style="left:39px;top:150.7px;width:7px;height:10.5px;background:rgba(255,255,255,0.28);filter:blur(0.8px)"></div>
<div class="a" style="left:35.5px;top:166px;width:13px;height:13px;background:rgba(255,255,255,0.25);filter:blur(1.1px)"></div>
<div class="a" style="left:39px;top:167px;width:7px;height:10px;background:rgba(255,255,255,0.28);filter:blur(0.8px)"></div>
<div class="a" style="left:35.5px;top:183.5px;width:13px;height:15px;background:rgba(255,255,255,0.25);filter:blur(1.1px)"></div>
<div class="a" style="left:39px;top:184.5px;width:7px;height:12px;background:rgba(255,255,255,0.28);filter:blur(0.8px)"></div>
<div class="a" style="left:35.5px;top:235px;width:13px;height:19px;background:rgba(255,255,255,0.25);filter:blur(1.1px)"></div>
<div class="a" style="left:39px;top:237px;width:7px;height:14px;background:rgba(255,255,255,0.25);filter:blur(0.8px)"></div>
<div class="a w c" style="left:29px;width:26px;top:254px;font-size:11px;line-height:13px;opacity:.7">希</div>
<div class="a w c" style="left:29px;width:26px;top:269.5px;font-size:13px;line-height:15px">羽</div>
<svg class="a" style="left:60px;top:47px" width="80" height="260" viewBox="245 160 80 260">
<defs><filter id="bl" x="-10%" y="-10%" width="120%" height="120%"><feGaussianBlur stdDeviation="1.3"/></filter>
<linearGradient id="fw" x1="0" y1="0" x2="0" y2="1"><stop offset="0" stop-color="#fff" stop-opacity="0"/><stop offset="1" stop-color="#fff"/></linearGradient>
<clipPath id="c1"><ellipse cx="283.500" cy="197" rx="29.500" ry="29.500"/></clipPath>
<clipPath id="c2"><ellipse cx="287" cy="287" rx="30" ry="37.500"/></clipPath>
<clipPath id="c3"><ellipse cx="283.500" cy="369.500" rx="33" ry="35.500"/></clipPath></defs>
<g filter="url(#bl)">
<g clip-path="url(#c1)"><rect x="250" y="160" width="70" height="75" fill="#3a80d6"/>
<path d="M254 190 H262 V198 H254 Z M258 206 H266 V214 H258 Z M254 198 H258 V206 H254 Z" fill="#fff" opacity=".45"/>
<path d="M262 182 H270 V190 H262 Z M262 198 H270 V206 H262 Z" fill="#1a4a90" opacity=".35"/>
<path d="M269 224 C266 210 266 176 284 169 C302 164 314 184 313 202 C313 214 309 221 300 224 Z" fill="#3c3238"/>
<path d="M302 222 C310 216 313 206 312 196 L318 210 L310 224 Z" fill="#54464a"/>
<ellipse cx="285" cy="202" rx="14" ry="19" fill="#ebd3c9"/>
<path d="M269 196 C269 178 300 172 304 194 C297 185 280 184 269 196 Z" fill="#3a3036"/>
<ellipse cx="279" cy="197.500" rx="2.300" ry="1.200" fill="#5a4444"/><ellipse cx="292" cy="197.500" rx="2.300" ry="1.200" fill="#5a4444"/>
<ellipse cx="285.500" cy="209.500" rx="3" ry="1.400" fill="#d88c8c"/>
<path d="M256 236 C258 218 276 217 285 220 C296 217 310 219 312 236 Z" fill="#f4eeee"/>
<rect x="250" y="213" width="70" height="14" fill="url(#fw)"/><rect x="250" y="226" width="70" height="10" fill="#fff"/></g>
<g clip-path="url(#c2)"><rect x="250" y="245" width="75" height="85" fill="#1572f2"/>
<path d="M266 330 C268 312 276 310 287 310 C298 310 306 312 308 330 Z" fill="#8088a8"/>
<path d="M278 330 L280 306 H294 L296 330 Z" fill="#e8c8b8"/>
<ellipse cx="286.500" cy="291" rx="18.700" ry="23.500" fill="#e8c6b6"/>
<path d="M267 289 C258 241 315 241 306.500 289 C305 276 301 272 286.500 272 C272 272 268.500 276 267 289 Z" fill="#1e1a1c"/>
<ellipse cx="279" cy="284" rx="2.600" ry="1.300" fill="#6a4c48"/><ellipse cx="294" cy="284" rx="2.600" ry="1.300" fill="#6a4c48"/>
<ellipse cx="286.500" cy="301" rx="3.600" ry="1.500" fill="#cc8484"/></g>
<g clip-path="url(#c3)"><rect x="248" y="330" width="72" height="80" fill="#2c80d2"/>
<path d="M259 399 C252 358 260 337 284 337 C308 337 313 360 309 399 Z" fill="#15110f"/>
<path d="M268 410 C270 396 296 396 298 410 Z" fill="#f0e0d8"/>
<path d="M275 404 L276 384 H290 L291 404 Z" fill="#ecd2c4"/>
<ellipse cx="282" cy="368" rx="16" ry="21" fill="#efd8cc"/>
<path d="M265 366 C264 342 302 342 300 368 C296 354 290 350 283 350 C275 350 268 356 265 366 Z" fill="#15110f"/>
<ellipse cx="276" cy="364" rx="2.300" ry="1.200" fill="#5a4040"/><ellipse cx="290" cy="364" rx="2.300" ry="1.200" fill="#5a4040"/>
<ellipse cx="283" cy="380" rx="3.200" ry="1.500" fill="#d88888"/>
<rect x="248" y="396" width="72" height="10" fill="url(#fw)"/></g>
</g>
</svg>
<div class="h3" style="left:160.5px;top:69px">团队负责人</div>
<div class="ds" style="left:149px;top:92px">苔花公益教育领航者、践<br>行者，主要负责把控全局</div>
<div class="h3" style="left:153px;top:155px">行政管理主任</div>
<div class="ds" style="left:149px;top:177.5px">协助管理团队，保障团队<br>与校外机构的顺利对接。</div>
<div class="h3" style="left:153px;top:240px">教学科研主任</div>
<div class="ds" style="left:149px;top:263px">协助管理团队、负责课程<br>教授，以及对教学组人员<br>教学培训</div>
<svg class="a" style="left:245px;top:47px" width="45" height="245" viewBox="430 160 45 245" fill="none" stroke="#3fb595" stroke-width="1"><path d="M469 166.500 C457 166.500 454.500 167.500 454.500 174 V278 C454.500 283.500 451 284.800 436 285.300 C451 285.800 454.500 287 454.500 292 V392 C454.500 398.500 457 399.800 469 399.800"/></svg>
<div class="bx" style="left:293px;top:56px"><b></b><i></i><u></u></div>
<div class="a" style="left:299px;top:94px;width:72px;height:4px;border-radius:50%;background:#bfeee2;filter:blur(1.200px)"></div>
<div class="a" style="left:299px;top:52.5px;width:72px;height:4px;border-radius:50%;background:#bfeee2;filter:blur(1.200px)"></div>
<div class="bx" style="left:293px;top:103.7px"><b></b><i></i><u></u></div>
<div class="a" style="left:299px;top:141.7px;width:72px;height:4px;border-radius:50%;background:#bfeee2;filter:blur(1.200px)"></div>
<div class="a" style="left:299px;top:100.2px;width:72px;height:4px;border-radius:50%;background:#bfeee2;filter:blur(1.200px)"></div>
<div class="bx" style="left:293px;top:150.3px"><b></b><i></i><u></u></div>
<div class="a" style="left:299px;top:188.3px;width:72px;height:4px;border-radius:50%;background:#bfeee2;filter:blur(1.200px)"></div>
<div class="a" style="left:299px;top:146.8px;width:72px;height:4px;border-radius:50%;background:#bfeee2;filter:blur(1.200px)"></div>
<div class="bx" style="left:294px;top:200.3px"><b></b><i></i><u></u></div>
<div class="a" style="left:300px;top:238.3px;width:72px;height:4px;border-radius:50%;background:#bfeee2;filter:blur(1.200px)"></div>
<div class="a" style="left:300px;top:196.8px;width:72px;height:4px;border-radius:50%;background:#bfeee2;filter:blur(1.200px)"></div>
<div class="bx" style="left:294px;top:249.300px;height:38.700px"><b></b><i></i><u></u></div>
<div class="a" style="left:300px;top:288px;width:72px;height:4px;border-radius:50%;background:#bfeee2;filter:blur(1.200px)"></div>
<div class="a" style="left:300px;top:246.5px;width:72px;height:4px;border-radius:50%;background:#bfeee2;filter:blur(1.200px)"></div>
<div class="rb" style="top:66.7px"></div>
<div class="a" style="left:401px;top:85.2px;width:72px;height:4px;border-radius:50%;background:#c4f0e5;filter:blur(1.200px)"></div>
<div class="a" style="left:401px;top:63.2px;width:72px;height:4px;border-radius:50%;background:#c4f0e5;filter:blur(1.200px)"></div>
<div class="rb" style="top:116.2px"></div>
<div class="a" style="left:401px;top:134.7px;width:72px;height:4px;border-radius:50%;background:#c4f0e5;filter:blur(1.200px)"></div>
<div class="a" style="left:401px;top:112.7px;width:72px;height:4px;border-radius:50%;background:#c4f0e5;filter:blur(1.200px)"></div>
<div class="rb" style="top:161.3px"></div>
<div class="a" style="left:401px;top:179.8px;width:72px;height:4px;border-radius:50%;background:#c4f0e5;filter:blur(1.200px)"></div>
<div class="a" style="left:401px;top:157.8px;width:72px;height:4px;border-radius:50%;background:#c4f0e5;filter:blur(1.200px)"></div>
<div class="rb" style="top:260px"></div>
<div class="a" style="left:401px;top:278.5px;width:72px;height:4px;border-radius:50%;background:#c4f0e5;filter:blur(1.200px)"></div>
<div class="a" style="left:401px;top:256.5px;width:72px;height:4px;border-radius:50%;background:#c4f0e5;filter:blur(1.200px)"></div>
<div class="a" style="left:314px;top:60px;width:40px;height:11px;background:rgba(255,255,255,0.3);filter:blur(1.2px)"></div>
<div class="a" style="left:313px;top:80px;width:36px;height:11px;background:rgba(255,255,255,0.22);filter:blur(1.2px)"></div>
<div class="bt serif" style="left:349.500px;top:79.500px;font-size:10px;opacity:0.4">长</div>
<div class="a" style="left:315px;top:108px;width:34px;height:11px;background:rgba(255,255,255,0.3);filter:blur(1.2px)"></div>
<div class="bt serif" style="left:352px;top:107px;font-size:10px;opacity:0.35">晟</div>
<div class="bt serif" style="left:305.5px;top:126.5px;font-size:11px;opacity:1">人</div>
<div class="a" style="left:319px;top:127px;width:32px;height:11px;background:rgba(255,255,255,0.25);filter:blur(1.2px)"></div>
<div class="bt serif" style="left:354px;top:126.5px;font-size:10px;opacity:0.5">长</div>
<div class="a" style="left:324px;top:155px;width:24px;height:11px;background:rgba(255,255,255,0.3);filter:blur(1.2px)"></div>
<div class="bt serif" style="left:306px;top:173px;font-size:11px;opacity:1">教学</div>
<div class="a" style="left:330px;top:174px;width:30px;height:11px;background:rgba(255,255,255,0.25);filter:blur(1.2px)"></div>
<div class="bt serif" style="left:314.5px;top:203.5px;font-size:12px;opacity:1">洪</div>
<div class="a" style="left:330px;top:204px;width:26px;height:11px;background:rgba(255,255,255,0.3);filter:blur(1.2px)"></div>
<div class="bt serif" style="left:306px;top:223px;font-size:11px;opacity:1">财务</div>
<div class="a" style="left:330px;top:224px;width:30px;height:11px;background:rgba(255,255,255,0.25);filter:blur(1.2px)"></div>
<div class="a" style="left:315px;top:254px;width:36px;height:11px;background:rgba(255,255,255,0.3);filter:blur(1.2px)"></div>
<div class="a" style="left:305px;top:273px;width:36px;height:11px;background:rgba(255,255,255,0.22);filter:blur(1.2px)"></div>
<div class="bt serif" style="left:342.5px;top:273px;font-size:11px;opacity:1">部长</div>
<div class="a" style="left:425px;top:71px;width:14px;height:11px;background:rgba(255,255,255,0.25);filter:blur(1.2px)"></div>
<div class="bt serif" style="left:438px;top:70.5px;font-size:11px;opacity:0.6">畅</div>
<div class="a" style="left:421px;top:120px;width:32px;height:11px;background:rgba(255,255,255,0.3);filter:blur(1.2px)"></div>
<div class="a" style="left:415px;top:165px;width:36px;height:11px;background:rgba(255,255,255,0.3);filter:blur(1.2px)"></div>
<div class="a" style="left:416px;top:264px;width:40px;height:11px;background:rgba(255,255,255,0.3);filter:blur(1.2px)"></div>
</div>
<div class="a" id="notes"><div class="t" style="left:11px;top:7px;font-size:14.600px;line-height:18px;height:18px;color:#5e5e5e">单击此处添加备注</div>
<div class="a" style="left:680px;top:2.500px;width:10px;height:9px;background:#fff"></div>
<div class="a" style="left:680px;top:13.500px;width:10px;height:8.500px;background:#fff"></div>
<svg class="a" style="left:682.500px;top:5.500px" width="5" height="3" viewBox="0 0 5 3"><path d="M0 3 L2.500 0 L5 3 Z" fill="#666"/></svg>
<svg class="a" style="left:682.500px;top:16.500px" width="5" height="3" viewBox="0 0 5 3"><path d="M0 0 L2.500 3 L5 0 Z" fill="#666"/></svg>
</div>
<div class="a" id="status"><div class="t" style="left:132px;top:3px;font-size:7.800px;color:#444">中文(中国)</div>
<svg class="a" style="left:488px;top:4px" width="8" height="8" viewBox="0 0 8 8" fill="none" stroke="#555" stroke-width=".8"><path d="M.5 7 H7.500 M.5 4.800 H7.500 M3 2.500 L4 1.200 L5 2.500"/></svg>
<div class="t" style="left:500px;top:3px;font-size:7.800px;color:#444">备注</div>
<svg class="a" style="left:528px;top:3.500px" width="10" height="9" viewBox="0 0 10 9"><path d="M.5 .5 H9.500 V6 H4.500 L2.500 8.300 V6 H.5 Z" fill="#444"/></svg>
<div class="t" style="left:538.500px;top:3px;font-size:7.800px;color:#444">批注</div>
<div class="a" style="left:568px;top:0;width:26px;height:16px;background:#c6c6c6"></div>
<svg class="a" style="left:568px;top:0" width="240" height="16" viewBox="584 465 240 16" fill="none" stroke="#777" stroke-width=".8">
<path d="M593 469.500 H601.500 V476.500 H593 Z M595 469.500 V474 H599.500 V469.500"/>
<path d="M620.500 469.500 H624 V472.500 H620.500 Z M625.500 469.500 H629 V472.500 H625.500 Z M620.500 474 H624 V477 H620.500 Z M625.500 474 H629 V477 H625.500 Z" stroke="#8a8a8a"/>
<path d="M647 470 H656 V476.500 H647 Z M651.500 470 V476.500 M648 469 H650.500 M652.500 469 H655" stroke="#8a8a8a"/>
<path d="M673 469.500 H682 M674 469.800 V474.500 H681 V469.800 M677.500 474.500 V477 M675.500 477.300 H679.500" stroke="#777"/>
<path d="M695.500 473.500 H699.500 M773 473.500 H777.500 M775.250 471.300 V475.700" stroke="#555"/>
<path d="M703 473.500 H769" stroke="#9a9a9a" stroke-width=".7"/><path d="M736 471.500 V475.500" stroke="#9a9a9a" stroke-width=".7"/>
<rect x="723.300" y="469.500" width="2.600" height="8" fill="#555" stroke="none"/>
<path d="M813.500 470 H819.500 V476 H813.500 Z M815 471.500 L818 474.500 M818 471.500 L815 474.500" stroke="#666" stroke-width=".7"/>
</svg>
<div class="t" style="left:770px;top:3px;font-size:8.300px;color:#444">68%</div>
</div>
<div class="a" id="vid"><div class="a" id="vhead"></div><div class="a" id="vbody"></div>
<div class="a" style="left:23.500px;top:1px;width:1px;height:21px;background:#2a2c2f"></div>
<svg class="a" style="left:7px;top:5px" width="11" height="13" viewBox="0 0 11 13" fill="none"><rect x="3.800" y="1.500" width="3.400" height="6" rx="1.700" fill="#8a8d91"/><path d="M2.200 6 C2.200 10 8.800 10 8.800 6 M5.500 9.200 V11.200 M3.800 11.300 H7.200" stroke="#8a8d91" stroke-width=".8"/><path d="M1.200 10.800 L9.800 1.200" stroke="#e0403a" stroke-width="1"/></svg>
<div class="t" style="left:29.500px;top:7.800px;font-size:8px;color:#f0f0f0">正在讲话: 海边的石头;</div>
<svg class="a" style="left:108px;top:5px" width="26" height="15" viewBox="0 0 26 15"><path d="M0 7.500 L7 .5 L14 7.500 L7 14.500 Z" fill="#46494d"/><path d="M9 7.500 L16.500 0 L24 7.500 L16.500 15 Z" fill="#52555a"/><path d="M7 7.500 L11.500 3 L16 7.500 L11.500 12 Z" fill="#5c5f64"/></svg>
<svg class="a" style="left:59.700px;top:39.700px" width="44.400" height="44.400" viewBox="0 0 44.400 44.400"><defs><clipPath id="av"><circle cx="22.200" cy="22.200" r="22.200"/></clipPath><filter id="b2" x="-10%" y="-10%" width="120%" height="120%"><feGaussianBlur stdDeviation=".6"/></filter>
<linearGradient id="sky" x1="0" y1="0" x2="0" y2="1"><stop offset="0" stop-color="#6a9ae0"/><stop offset=".55" stop-color="#a8c4e4"/><stop offset=".85" stop-color="#e4e0d0"/><stop offset="1" stop-color="#e8c898"/></linearGradient>
<linearGradient id="sea" x1="0" y1="0" x2="0" y2="1"><stop offset="0" stop-color="#4a5666"/><stop offset=".4" stop-color="#343c48"/><stop offset="1" stop-color="#23272e"/></linearGradient></defs>
<g clip-path="url(#av)"><rect width="44.400" height="19.600" fill="url(#sky)"/><rect y="19.400" width="44.400" height="25" fill="url(#sea)"/>
<g filter="url(#b2)">
<path d="M0 9 C6 6.500 12 8.500 18 7 C24 5 32 8 38 6.500 C41 6 43 7 44.400 6.500 V10.500 C38 12.500 30 11 24 12.500 C16 14 8 12 0 13.500 Z" fill="#4c526a"/>
<path d="M0 19 H44.400 V20 H0 Z" fill="#5c6470"/>
<path d="M0 21 C2 20.500 4 21 4.500 22 C3 23 1 23 0 22.500 Z" fill="#b88a58"/>
<path d="M21 25.500 C23 23.800 29 23.800 31 25.300 C29.500 27.300 23 27.500 21 25.500 Z" fill="#c89c5c"/>
<path d="M33 25 C34.500 23.300 39 23.500 40 25.500 C42 25 43.500 25.500 44 26.500 C42 28 39 27.500 38.500 28.500 C36.500 29 34 28 33 25 Z" fill="#c09458"/>
<path d="M25.500 31 C26 27.500 31 26.500 34 28.500 C36.500 30.500 35.500 34 32 35 C28.500 35.500 25.500 34 25.500 31 Z" fill="#caa060"/>
<path d="M2.500 31.500 C5 29.500 9 30 10 31 C13 28.500 20 29 22.500 32 C24 34 22 35.500 19 35.500 C22 36 25.500 38 24.500 40.500 C22 42.500 14 42.500 11.500 40.500 C8 41.500 4 38 3.500 35.500 C2 34.500 1.500 32.500 2.500 31.500 Z" fill="#c69c5c"/>
<path d="M10 32.500 C11 35 10.500 38.500 11.500 40.500 C9 40 8.500 36 10 32.500 Z M12 36 C15 35 20 35 22 36.500 C19 36 15 36.500 12 36 Z" fill="#3a3020"/>
<path d="M12 41.500 C16 43.500 24 43 26 40 C27 42 20 45 12 41.500 Z" fill="#6a5030"/>
</g></g></svg>
<div class="a" style="left:0;top:99px;width:70.500px;height:17px;background:#161718"></div>
<svg class="a" style="left:4.500px;top:101px" width="8" height="12" viewBox="0 0 8 12" fill="none"><rect x="2" y=".5" width="4" height="7.500" rx="2" fill="#3fd03a"/><path d="M.6 5.500 C.6 10 7.400 10 7.400 5.500" stroke="#e8e8e8" stroke-width=".9"/><path d="M4 9 V11.500" stroke="#e8e8e8" stroke-width="1.400"/></svg>
<div class="t w" style="left:14.500px;top:102px;font-size:10.800px;line-height:12px;height:12px">海边的石头</div>
</div>
<div class="a" id="share"><svg class="a" style="left:0;top:2px" width="16" height="12" viewBox="0 0 16 12"><path d="M0 1 H4 V7 H0 Z M0 8.500 H4.500 V10 H0 Z" fill="#fff"/><rect x="8.500" y=".5" width="4" height="7" rx="2" fill="#fff"/><path d="M6.800 5.500 C6.800 10 14.200 10 14.200 5.500 M10.500 9 V11.500" stroke="#fff" stroke-width="1" fill="none"/></svg>
<div class="t w" style="left:16.300px;top:2px;font-size:10.800px;line-height:13px;height:13px">苔花+杜希羽的屏幕共享<span style="opacity:.35;font-size:8px"> ?</span></div>
</div>
<div class="a" style="left:0;top:0;width:70px;height:50px;z-index:3;overflow:hidden">
<div class="a" style="left:-4px;top:25px;width:59px;height:19.500px;border-radius:3px;background:rgba(20,10,8,.32);box-shadow:0 0 1.500px rgba(0,0,0,.25)"></div>
<div class="a" style="left:5.800px;top:30px;width:9.600px;height:9.600px;border-radius:50%;border:1px solid #8e2a26"></div>
<div class="a" style="left:8px;top:32.200px;width:5.200px;height:5.200px;border-radius:50%;background:#a52a25"></div>
<div class="t" style="left:23.200px;top:29.500px;font-size:8.200px;color:rgba(255,255,255,.85)">录制中</div>
</div>
</body>
</html>
